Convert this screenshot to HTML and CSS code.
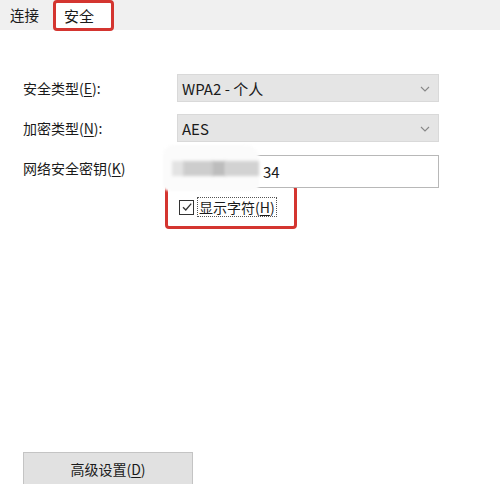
FILE: index.html
```html
<!DOCTYPE html>
<html lang="zh">
<head>
<meta charset="utf-8">
<link rel="stylesheet" href="styles.css">
</head>
<body>
<div class="tabs">
  <div class="tab">连接</div>
  <div class="tab active">安全</div>
</div>
<div class="panel">
  <div class="form">
    <div class="label">安全类型(<u>E</u>):</div>
    <div class="select"><span>WPA2 - 个人</span><svg class="chev" width="10" height="6" viewBox="0 0 10 6"><path d="M1 1 L5 5 L9 1" fill="none" stroke="#888" stroke-width="1.1"/></svg></div>
    <div class="label">加密类型(<u>N</u>):</div>
    <div class="select"><span>AES</span><svg class="chev" width="10" height="6" viewBox="0 0 10 6"><path d="M1 1 L5 5 L9 1" fill="none" stroke="#888" stroke-width="1.1"/></svg></div>
    <div class="label">网络安全密钥(<u>K</u>)</div>
    <div class="inputwrap">
      <div class="input">34</div>
      <div class="mask"><i class="b0"></i><i class="b1"></i><i class="b2"></i><i class="b3"></i></div>
    </div>
  </div>
  <div class="checkrow">
    <div class="mark">
      <span class="box"><svg width="12" height="12" viewBox="0 0 12 12"><path d="M2 6.2 L4.8 9 L10.2 2.6" fill="none" stroke="#333" stroke-width="1.3"/></svg></span>
      <span class="ctext">显示字符(<u>H</u>)</span>
    </div>
  </div>
  <div class="spacer"></div>
  <div class="btn">高级设置(<u>D</u>)</div>
</div>
</body>
</html>
```
FILE: styles.css
```css
html, body {
  margin: 0;
  padding: 0;
  background: #fff;
  width: 500px;
  height: 484px;
  overflow: hidden;
  font-family: "Noto Sans CJK SC", "Noto Sans", sans-serif;
  font-size: 14px;
  color: #1a1a1a;
}
.tabs {
  height: 30px;
  background: #f0f0f0;
  display: flex;
  align-items: flex-start;
  padding-left: 6px;
}
.tab {
  display: flex;
  align-items: center;
  height: 30px;
  padding: 0 4px;
  line-height: 1;
  font-size: 14.5px;
}
.tab.active {
  margin-left: 10px;
  width: 61px;
  height: 31px;
  box-sizing: border-box;
  padding: 0 0 0 8px;
  background: #fff;
  border: 3px solid #d43530;
  border-radius: 4px;
  font-size: 15px;
  position: relative;
  z-index: 1;
}
.panel {
  padding: 44px 0 0 23px;
  display: flex;
  flex-direction: column;
  height: 410px;
}
.form {
  display: grid;
  grid-template-columns: 154px 262px;
  grid-auto-rows: 28px;
  row-gap: 12px;
  align-items: center;
}
.label {
  line-height: 28px;
}
u { text-decoration: underline; text-underline-offset: 2px; }
.select {
  height: 28px;
  box-sizing: border-box;
  background: #e5e5e5;
  border: 1px solid #d9d9d9;
  display: flex;
  align-items: center;
  justify-content: space-between;
  padding: 0 8px 0 4px;
  font-size: 15px;
}
.chev { margin-top: 1px; }
.inputwrap {
  position: relative;
  height: 33px;
  margin-top: 7px;
}
.input {
  height: 33px;
  box-sizing: border-box;
  border: 1px solid #b8b8b8;
  background: #fff;
  padding-left: 85px;
  display: flex;
  align-items: center;
  font-size: 15px;
}
.mask {
  position: absolute;
  left: -14px;
  top: -10px;
  width: 96px;
  height: 46px;
  background: #fbfbfb;
  border-radius: 10px 14px 6px 6px;
  filter: blur(1px);
}
.mask i {
  position: absolute;
  top: 16px;
  height: 15px;
  filter: blur(1.2px);
}
.mask .b0 { left: 9px; width: 12px; background: #e3e3e3; }
.mask .b1 { left: 20px; width: 30px; background: #cdcdcd; }
.mask .b2 { left: 49px; width: 14px; background: #bdbdbd; }
.mask .b3 { left: 62px; width: 34px; background: #d2d2d2; }
.checkrow {
  margin-top: 3px;
  padding-left: 142px;
}
.mark {
  width: 132px;
  height: 44px;
  box-sizing: border-box;
  border: 3px solid #d43530;
  border-radius: 4px;
  display: flex;
  align-items: center;
  padding-left: 11px;
  gap: 3px;
}
.box {
  width: 13px;
  height: 13px;
  border: 1px solid #333;
  display: flex;
  align-items: center;
  justify-content: center;
  background: #fff;
}
.ctext {
  border: 1px dotted #555;
  padding: 0 1px;
  line-height: 18px;
}
.spacer { flex: 1; }
.btn {
  width: 170px;
  height: 34px;
  box-sizing: border-box;
  background: #e1e1e1;
  border: 1px solid #c4c4c4;
  display: flex;
  align-items: flex-start;
  justify-content: center;
  padding-top: 6px;
  margin-bottom: -2px;
}
```
